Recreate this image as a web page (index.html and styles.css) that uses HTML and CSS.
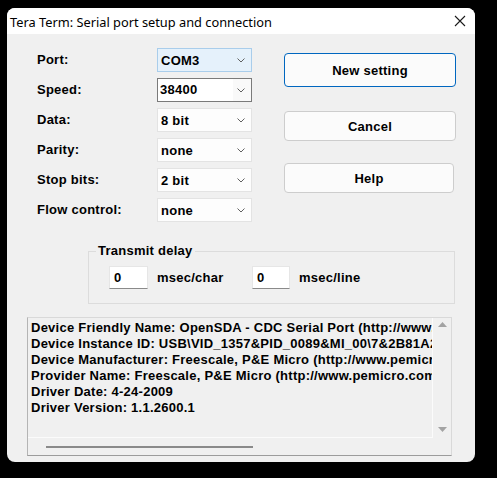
FILE: index.html
```html
<!DOCTYPE html>
<html>
<head>
<meta charset="utf-8">
<link rel="stylesheet" href="styles.css">
</head>
<body>
<div class="window">
  <div class="titlebar">
    <span class="title">Tera Term: Serial port setup and connection</span>
    <svg class="close" width="12" height="12" viewBox="0 0 12 12"><path d="M1 1 L11 11 M11 1 L1 11" stroke="#1b1b1b" stroke-width="1.1" fill="none"/></svg>
  </div>
  <div class="body">
    <div class="top">
      <div class="form">
        <span class="label">Port:</span>
        <div class="combo focus"><span>COM3</span><svg class="arrow" width="8" height="5" viewBox="0 0 8 5"><path d="M0.5 0.5 L4 4 L7.5 0.5" stroke="#606060" fill="none"/></svg></div>
        <span class="label">Speed:</span>
        <div class="combo edit"><span class="edit-text">38400</span><svg class="arrow" width="8" height="5" viewBox="0 0 8 5"><path d="M0.5 0.5 L4 4 L7.5 0.5" stroke="#606060" fill="none"/></svg></div>
        <span class="label">Data:</span>
        <div class="combo"><span>8 bit</span><svg class="arrow" width="8" height="5" viewBox="0 0 8 5"><path d="M0.5 0.5 L4 4 L7.5 0.5" stroke="#606060" fill="none"/></svg></div>
        <span class="label">Parity:</span>
        <div class="combo"><span>none</span><svg class="arrow" width="8" height="5" viewBox="0 0 8 5"><path d="M0.5 0.5 L4 4 L7.5 0.5" stroke="#606060" fill="none"/></svg></div>
        <span class="label">Stop bits:</span>
        <div class="combo"><span>2 bit</span><svg class="arrow" width="8" height="5" viewBox="0 0 8 5"><path d="M0.5 0.5 L4 4 L7.5 0.5" stroke="#606060" fill="none"/></svg></div>
        <span class="label">Flow control:</span>
        <div class="combo"><span>none</span><svg class="arrow" width="8" height="5" viewBox="0 0 8 5"><path d="M0.5 0.5 L4 4 L7.5 0.5" stroke="#606060" fill="none"/></svg></div>
      </div>
      <div class="buttons">
        <div class="btn default">New setting</div>
        <div class="btn cancel">Cancel</div>
        <div class="btn help">Help</div>
      </div>
    </div>
    <fieldset class="delay">
      <legend>Transmit delay</legend>
      <div class="delay-row">
        <div class="delay-item first"><span class="numbox">0</span><span>msec/char</span></div>
        <div class="delay-item"><span class="numbox second">0</span><span>msec/line</span></div>
      </div>
    </fieldset>
    <div class="info">
      <div class="info-main">
        <div class="info-text">
          <div>Device Friendly Name: OpenSDA - CDC Serial Port (http://www.pemicro.com/opensda) (COM3)</div>
          <div>Device Instance ID: USB\VID_1357&amp;PID_0089&amp;MI_00\7&amp;2B81A2B2&amp;0&amp;0000</div>
          <div>Device Manufacturer: Freescale, P&amp;E Micro (http://www.pemicro.com)</div>
          <div>Provider Name: Freescale, P&amp;E Micro (http://www.pemicro.com)</div>
          <div>Driver Date: 4-24-2009</div>
          <div>Driver Version: 1.1.2600.1</div>
        </div>
        <div class="vscroll">
          <svg width="9" height="5" viewBox="0 0 9 5"><path d="M0 5 L4.5 0 L9 5 Z" fill="#a3a3a3"/></svg>
          <svg width="9" height="5" viewBox="0 0 9 5"><path d="M0 0 L9 0 L4.5 5 Z" fill="#a3a3a3"/></svg>
        </div>
      </div>
      <div class="hscroll"><div class="thumb"></div></div>
    </div>
  </div>
</div>
</body>
</html>
```
FILE: styles.css
```css
* { box-sizing: border-box; }
html, body { margin: 0; padding: 0; background: #000; }
body { padding: 8px 0 0 7px; width: 497px; height: 478px; overflow: hidden; }

.window {
  width: 468px;
  height: 454px;
  border-radius: 8px;
  overflow: hidden;
  background: #f0f0f0;
  display: flex;
  flex-direction: column;
}

.titlebar {
  height: 26px;
  background: #fff;
  display: flex;
  align-items: center;
  justify-content: space-between;
  padding: 0 9px 0 3px;
  flex: none;
}
.title {
  font-family: "Noto Sans", "Open Sans", sans-serif;
  font-size: 12.8px;
  color: #000;
  padding-top: 1px;
}

.body {
  flex: 1;
  font-family: "Liberation Sans", Arial, sans-serif;
  font-weight: bold;
  font-size: 13px;
  letter-spacing: 0.25px;
  color: #000;
  display: flex;
  flex-direction: column;
}

.top { display: flex; height: 188px; }

.form {
  display: grid;
  grid-template-columns: 120px 95px;
  grid-auto-rows: 24px;
  row-gap: 6px;
  padding: 14px 0 0 30px;
  align-items: center;
}
.label { line-height: 24px; }

.combo {
  height: 24px;
  border: 1px solid #e3e3e3;
  background: #fdfdfd;
  display: flex;
  align-items: center;
  justify-content: space-between;
  padding: 0 6px 0 3px;
}
.combo.focus { background: #e5f1fb; border-color: #a9cdeb; }
.combo.edit { background: #f9f9f9; border-color: #7a7a7a; padding-left: 0; }
.combo.edit .edit-text { background: #fff; align-self: stretch; line-height: 22px; padding-left: 2px; width: 75px; }
.arrow { flex: none; }

.buttons {
  display: flex;
  flex-direction: column;
  margin-left: 32px;
  padding-top: 19px;
}
.btn {
  width: 172px;
  height: 30px;
  background: #fbfbfb;
  border: 1px solid #cdcdcd;
  border-radius: 4px;
  display: flex;
  align-items: center;
  justify-content: center;
}
.btn.default { height: 34px; border-color: #0067c0; }
.btn.cancel { margin-top: 24px; }
.btn.help { margin-top: 22px; width: 170px; }

.delay {
  margin: 22px 0 0 81px;
  width: 367px;
  border: 1px solid #dcdcdc;
  padding: 8px 0 14px 7px;
  min-width: 0;
}
.delay legend { padding: 0 2px; line-height: 14px; }
.delay-row { display: flex; margin-left: 13px; }
.delay-item { display: flex; align-items: center; gap: 9px; }
.delay-item.first { width: 143px; }
.numbox {
  width: 39px;
  height: 23px;
  background: #fff;
  border: 1px solid #e6e6e6;
  border-bottom-color: #8a8a8a;
  line-height: 21px;
  padding-left: 4px;
}
.numbox.second { width: 38px; }

.info {
  margin: 13px 0 0 20px;
  width: 425px;
  height: 139px;
  border: 1px solid #d9d9d9;
  border-left-color: #b4b4b4;
  border-bottom-color: #9c9c9c;
  display: flex;
  flex-direction: column;
}
.info-main { display: flex; height: 120px; }
.info-text {
  width: 405px;
  overflow: hidden;
  white-space: nowrap;
  padding: 2px 0 0 3px;
  line-height: 16px;
  border-right: 1px solid #fbfbfb;
  border-bottom: 1px solid #fbfbfb;
}
.vscroll {
  flex: 1;
  display: flex;
  flex-direction: column;
  justify-content: space-between;
  align-items: center;
  padding: 4px 0 6px 0;
}
.hscroll { flex: 1; padding: 8px 0 0 18px; }
.thumb { width: 207px; height: 2px; background: #8a8a8a; }
```
